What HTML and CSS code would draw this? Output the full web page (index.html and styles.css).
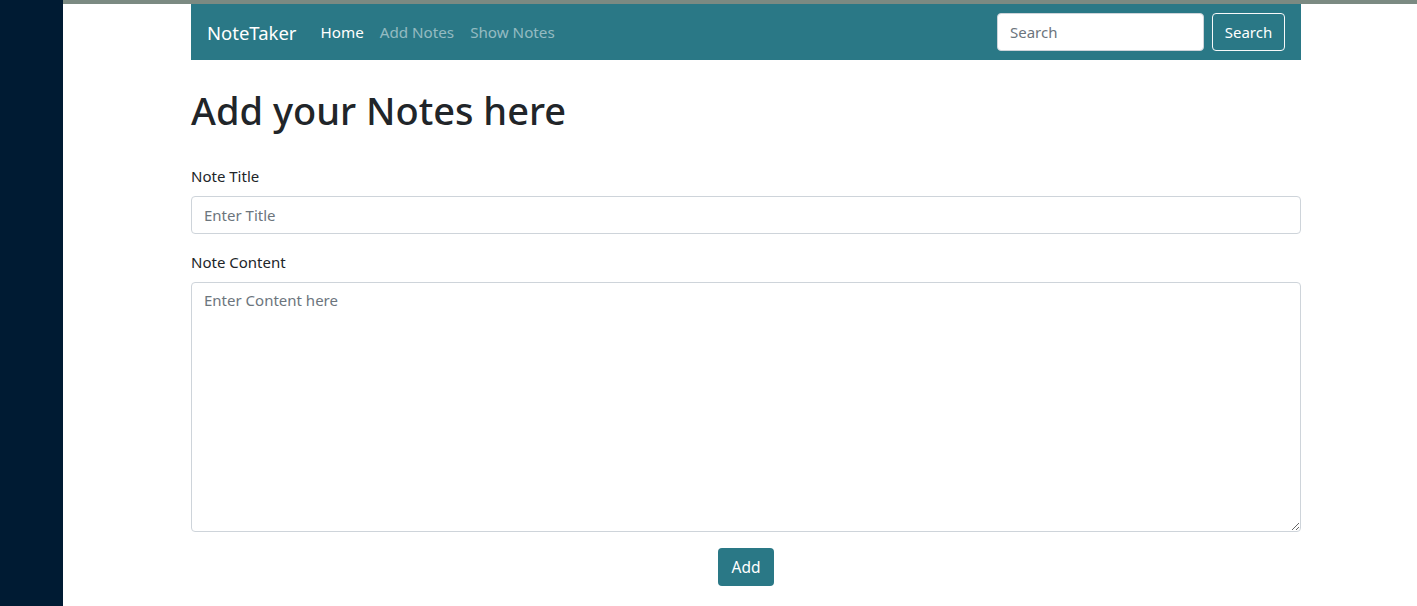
FILE: index.html
```html
<!DOCTYPE html>
<html lang="en">
<head>
<meta charset="utf-8">
<title>NoteTaker</title>
<link rel="stylesheet" href="styles.css">
</head>
<body>
<div class="page">
  <aside class="sidebar"></aside>
  <div class="main">
    <div class="container">
      <nav class="navbar">
        <a class="brand" href="#">NoteTaker</a>
        <ul class="nav">
          <li><a class="nav-link active" href="#">Home</a></li>
          <li><a class="nav-link" href="#">Add Notes</a></li>
          <li><a class="nav-link" href="#">Show Notes</a></li>
        </ul>
        <form class="search">
          <input class="search-input" type="search" placeholder="Search">
          <button class="btn-outline" type="button">Search</button>
        </form>
      </nav>
      <h1 class="title">Add your Notes here</h1>
      <form class="note-form">
        <div class="group">
          <label class="label">Note Title</label>
          <input class="control" type="text" placeholder="Enter Title">
        </div>
        <div class="group">
          <label class="label">Note Content</label>
          <textarea class="control area" placeholder="Enter Content here"></textarea>
        </div>
        <div class="actions">
          <button class="btn-primary" type="button">Add</button>
        </div>
      </form>
    </div>
  </div>
</div>
</body>
</html>
```
FILE: styles.css
```css
* { box-sizing: border-box; }
html, body { margin: 0; padding: 0; height: 100%; }
body {
  font-family: "Noto Sans", "Open Sans", sans-serif;
  font-size: 15px;
  color: #212529;
  background: #fff;
  overflow: hidden;
}
.page { display: flex; height: 606px; }
.sidebar { width: 63px; flex: none; background: #001b33; }
.main { flex: 1; border-top: 4px solid #7b8a82; }
.container { width: 1110px; margin-left: 128px; }
.navbar {
  display: flex;
  align-items: center;
  height: 56px;
  padding: 0 16px;
  background: #2a7886;
}
.brand {
  color: #fff;
  font-size: 18.5px;
  text-decoration: none;
  margin-right: 24px;
}
.nav { display: flex; list-style: none; margin: 0; padding: 0; flex: 1; }
.nav-link {
  display: block;
  padding: 8px;
  color: rgba(255,255,255,0.5);
  text-decoration: none;
  font-size: 15.2px;
}
.nav li:first-child .nav-link { padding-left: 0; }
.nav-link.active { color: #fff; }
.search { display: flex; align-items: center; gap: 8px; }
.search-input {
  width: 207px;
  height: 38px;
  border: 1px solid #ced4da;
  border-radius: 4px;
  padding: 6px 12px;
  font: inherit;
  font-size: 15px;
  color: #495057;
  background: #fff;
}
.search-input::placeholder { color: #6c757d; }
.btn-outline {
  height: 38px;
  width: 73px;
  border: 1px solid #f8f9fa;
  border-radius: 4px;
  background: transparent;
  color: #fff;
  font: inherit;
  font-size: 15px;
  padding: 0;
}
.title {
  font-size: 38px;
  font-weight: 500;
  line-height: 48px;
  margin: 26px 0 30px;
  color: #212529;
}
.group { margin-bottom: 16px; }
.label { display: block; line-height: 24px; margin-bottom: 8px; font-size: 15px; }
.control {
  display: block;
  width: 100%;
  height: 38px;
  border: 1px solid #ced4da;
  border-radius: 4px;
  padding: 6px 12px;
  font: inherit;
  font-size: 15px;
  color: #495057;
  background: #fff;
}
.control::placeholder { color: #6c757d; }
.area { height: 250px; resize: vertical; padding-top: 7px; }
.actions { display: flex; justify-content: center; }
.btn-primary {
  width: 56px;
  height: 38px;
  border: none;
  border-radius: 4px;
  background: #2a7886;
  color: #fff;
  font: inherit;
  font-size: 15.5px;
  padding: 0;
}
```
